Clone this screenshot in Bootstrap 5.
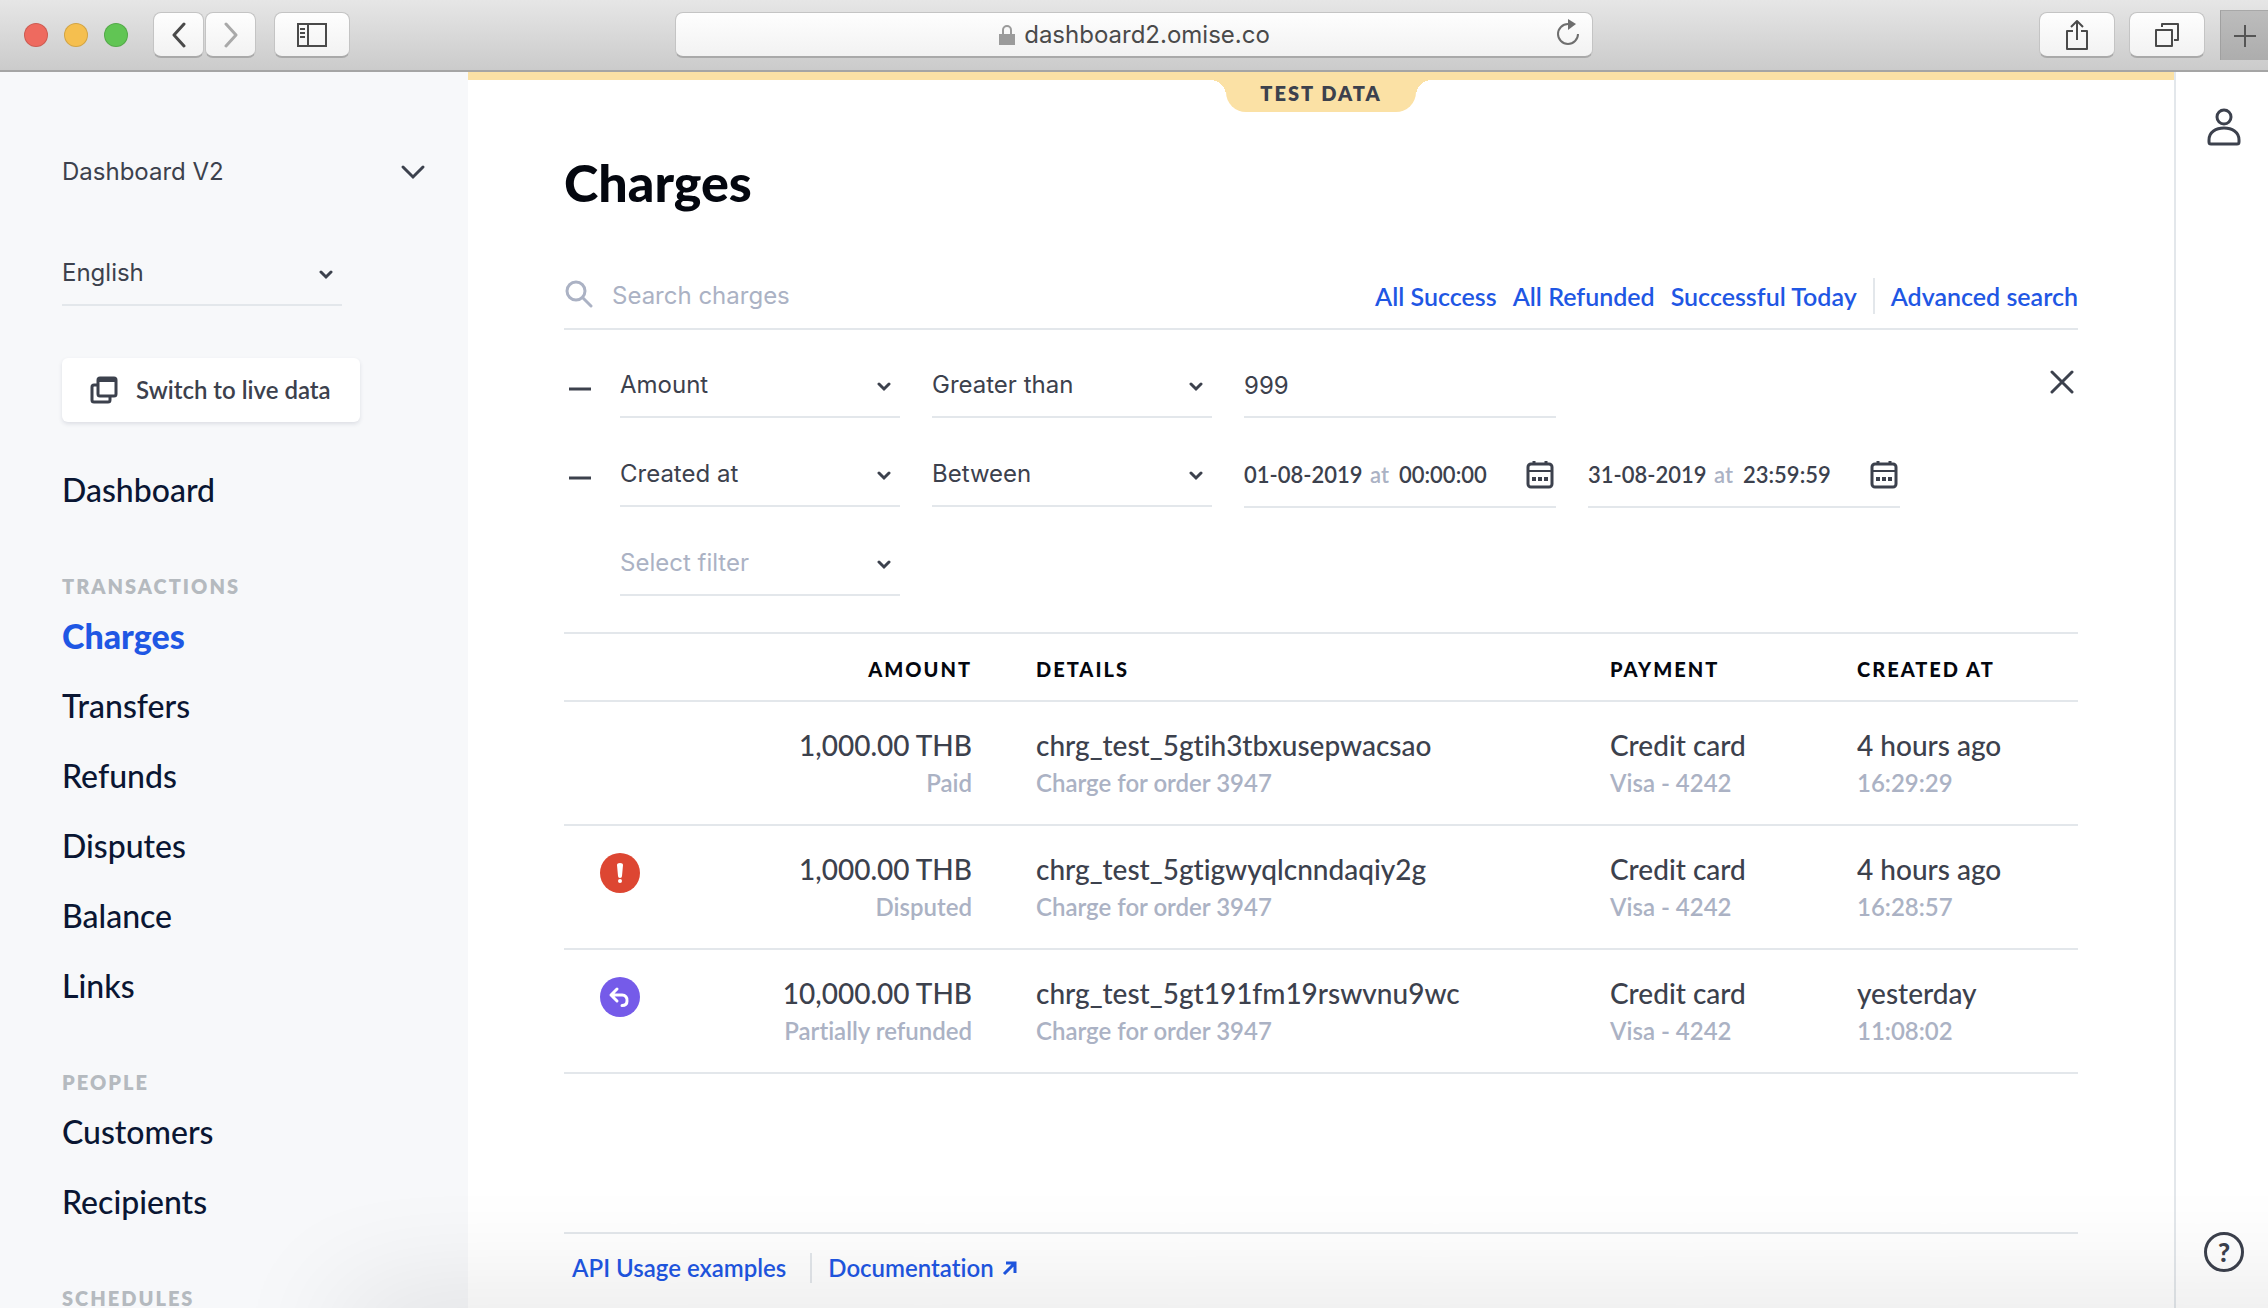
<!DOCTYPE html>
<html lang="en">
<head>
<meta charset="utf-8">
<meta name="viewport" content="width=device-width, initial-scale=1">
<title>Charges</title>
<link href="https://cdn.jsdelivr.net/npm/bootstrap@5.3.0/dist/css/bootstrap.min.css" rel="stylesheet">
<script src="https://cdn.jsdelivr.net/npm/bootstrap@5.3.0/dist/js/bootstrap.bundle.min.js"></script>
<style>
:root {
  --ink: #3c414d;
  --navy: #0a1633;
  --muted: #abb2c4;
  --rule: #e3e7eb;
  --link: #1f57e4;
  --brand: Lato, "Open Sans", sans-serif;
  --system: Inter, "Liberation Sans", sans-serif;
}
body { font-family: var(--brand); font-size: 24px; line-height: 32px; color: var(--ink); background: #fff; font-variant-ligatures: none; }
svg { display: block; flex: none; fill: none; stroke: currentColor; }
a { color: var(--link); text-decoration: none; }
button { color: inherit; }

/* browser toolbar */
.toolbar { height: 72px; background: linear-gradient(#e6e6e6, #cbcbcb); border-bottom: 2px solid #a5a5a5; font-family: var(--system); }
.toolbar-side { flex: 1 1 0; }
.lights { margin: 0 25px 0 24px; }
.light { width: 24px; height: 24px; border-radius: 50%; border: 1px solid rgba(0, 0, 0, .14); }
.light-red { background: #ee6a5f; }
.light-amber { background: #f5bf4f; }
.light-green { background: #61c554; }
.tool { height: 46px; border: 1px solid #c4c4c4; border-bottom: 2px solid #a9a9a9; border-radius: 8px; background: linear-gradient(#fefefe, #f2f2f2); color: #4a4a4a; padding: 0; display: flex; align-items: center; justify-content: center; }
.tool-slim { width: 51px; margin-right: 1px; }
.tool-wide { width: 76px; }
.tool-panel { margin-left: 17px; }
.tool-off { color: #a9a9a9; }
.address { width: 918px; position: relative; flex-shrink: 1; }
.address .lock { color: #9b9b9b; }
.address .reload { position: absolute; right: 12px; top: 6px; border: 0; background: none; padding: 0; color: #6e6e6e; }
.tool-pair { gap: 14px; margin-right: 15px; }
.new-tab { width: 48px; height: 50px; background: linear-gradient(#bcbcbc, #adadad); border: 0; border-left: 1px solid #a0a0a0; border-top: 1px solid #a8a8a8; color: #555; padding: 0; }

/* page shell */
.shell { height: calc(100vh - 72px); min-height: 0; }
.sidebar { width: 468px; background: #f7f8fa; padding: 83px 42px 0 62px; overflow: hidden; }
.account { border: 0; background: none; padding: 0; height: 34px; font-family: var(--system); font-size: 24px; }
.system-select, .system-input { height: 64px; border: 0; border-bottom: 2px solid var(--rule); border-radius: 0; padding: 0 32px 0 0; background-color: transparent; color: var(--ink); font-family: var(--system); font-size: 24px; line-height: 32px; appearance: none; outline: 0; }
.system-select.unset { color: var(--muted); }
.picker { position: relative; }
.picker svg { position: absolute; right: 9px; top: 28px; pointer-events: none; }
.language { width: 280px; margin-top: 53px; }
.live { width: 298px; height: 64px; margin-top: 52px; padding: 0 28px; gap: 18px; background: #fff; border: 0; border-radius: 6px; box-shadow: 0 2px 4px rgba(30, 40, 70, .12); font-size: 24px; font-weight: 600; }
.menu { margin-top: 33px; font-size: 32px; font-weight: 500; }
.menu a { display: block; color: var(--navy); line-height: 70px; }
.menu a.current { color: var(--link); font-size: 34px; font-weight: 900; }
.menu h2 { margin: 52px 0 6px; font-size: 20px; line-height: 18px; font-weight: 800; letter-spacing: 2px; color: #b5babf; text-transform: uppercase; }

.content { flex: 1 1 0; min-width: 0; border-top: 8px solid #fbe1a5; padding: 0 96px; position: relative; }
.test-tab { position: absolute; top: 0; left: 50%; margin-left: -95px; width: 190px; height: 32px; line-height: 26px; text-align: center; background: #fbe1a5; border-radius: 0 0 20px 20px; font-size: 20px; font-weight: 800; letter-spacing: 2px; }
.test-tab::before, .test-tab::after { content: ""; position: absolute; top: 0; width: 16px; height: 16px; }
.test-tab::before { right: 100%; background: radial-gradient(circle at 0 100%, transparent 16px, #fbe1a5 16px); }
.test-tab::after { left: 100%; background: radial-gradient(circle at 100% 100%, transparent 16px, #fbe1a5 16px); }
.page-title { margin: 72px 0 0; font-size: 52px; line-height: 60px; font-weight: 900; color: #04070f; }
.search { margin-top: 52px; height: 66px; border-bottom: 2px solid var(--rule); }
.search svg { color: var(--muted); }
.search input { border: 0; outline: 0; padding: 0; width: 400px; font-family: var(--system); font-size: 24px; color: var(--ink); background: none; }
.search input::placeholder { color: var(--muted); opacity: 1; }
.search a { font-size: 25px; font-weight: 600; }
.page-foot a { font-weight: 600; }
.split { width: 2px; height: 36px; background: var(--rule); }
.filters { padding-top: 24px; }
.filter-row { height: 64px; margin-bottom: 25px; gap: 32px; }
.drop, .drop-gap { width: 24px; margin-left: 4px; margin-right: -4px; border: 0; background: none; padding: 6px 0 0; }
.field { width: 280px; }
.value { width: 312px; padding: 0; }
.moment { width: 312px; height: 65px; border-bottom: 2px solid var(--rule); margin-bottom: -1px; padding-right: 2px; font-size: 22px; font-weight: 600; }
.moment input { border: 0; outline: 0; padding: 0; background: none; color: var(--ink); font: inherit; }
.moment .day { width: 126px; }
.moment .hour { width: 108px; }
.moment label { color: var(--muted); width: 29px; }
.clear { border: 0; background: none; padding: 0 0 8px; margin-right: 4px; }

.charges { margin-top: 11px; width: 100%; table-layout: fixed; border-top: 2px solid var(--rule); border-collapse: collapse; }
.charges tr { border-bottom: 2px solid var(--rule); }
.charges th { padding: 23px 0 19px 32px; font-size: 20px; line-height: 24px; font-weight: 900; letter-spacing: 2px; color: #04070f; text-transform: uppercase; }
.charges td { padding: 24px 0 22px 32px; vertical-align: top; white-space: nowrap; }
.charges .sum { text-align: right; padding-left: 0; padding-right: 32px; }
.charges .state { padding: 27px 0 0 36px; }
.charges .col-state { width: 150px; }
.charges .col-sum { width: 290px; }
.charges .col-pay { width: 247px; }
.charges .col-time { width: 253px; }
.line-main { display: block; font-size: 28px; line-height: 38px; font-weight: 500; }
.line-sub { display: block; font-size: 24px; line-height: 38px; font-weight: 600; color: var(--muted); }
.page-foot { height: 76px; border-top: 2px solid var(--rule); padding: 0 0 6px 8px; gap: 16px; }
.page-foot .split { height: 30px; margin-left: 8px; }

.rail { width: 94px; border-left: 2px solid var(--rule); padding: 36px 0 36px 4px; }
.rail button { border: 0; background: none; padding: 0; }
.rail .help { font-size: 26px; font-weight: 900; line-height: 34px; width: 40px; height: 40px; border: 3px solid var(--ink); border-radius: 50%; }
.window-shade { position: fixed; left: 345px; right: -200px; bottom: -60px; height: 60px; box-shadow: 0 0 120px rgba(0, 0, 0, .16); pointer-events: none; }
</style>
</head>
<body class="overflow-hidden">
<header class="toolbar d-flex align-items-center">
  <div class="toolbar-side d-flex align-items-center">
    <div class="lights d-flex gap-3"><span class="light light-red"></span><span class="light light-amber"></span><span class="light light-green"></span></div>
    <button class="tool tool-slim" aria-label="Back"><svg width="16" height="26" viewBox="0 0 16 26" stroke-width="3" stroke-linecap="round" stroke-linejoin="round"><path d="M13 2 3 13l10 11"/></svg></button>
    <button class="tool tool-slim tool-off" aria-label="Forward"><svg width="16" height="26" viewBox="0 0 16 26" stroke-width="3" stroke-linecap="round" stroke-linejoin="round"><path d="m3 2 10 11L3 24"/></svg></button>
    <button class="tool tool-wide tool-panel" aria-label="Show sidebar"><svg width="32" height="24" viewBox="0 0 32 24" stroke-width="2"><path d="M2 1h28v22H2zM12 1v22M4 6h5M4 10h5M4 14h5"/></svg></button>
  </div>
  <div class="tool address gap-2">
    <svg class="lock" width="18" height="22" viewBox="0 0 18 22" stroke-width="2"><path d="M5 10V6a4 4 0 0 1 8 0v4"/><path d="M1 10h16v11H1z" fill="currentColor" stroke="none"/></svg>
    <span>dashboard2.omise.co</span>
    <button class="reload" aria-label="Reload"><svg width="24" height="28" viewBox="0 0 24 28" stroke-width="2"><path d="M22 15a10 10 0 1 1-10-10"/><path d="m12 0 8 5-8 6z" fill="currentColor" stroke="none"/></svg></button>
  </div>
  <div class="toolbar-side d-flex justify-content-end align-items-center">
    <div class="tool-pair d-flex">
      <button class="tool tool-wide" aria-label="Share"><svg width="26" height="32" viewBox="0 0 26 32" stroke-width="2" stroke-linejoin="round"><path d="M9 12H3v18h20V12h-6M13 21V2M7 8l6-6 6 6"/></svg></button>
      <button class="tool tool-wide" aria-label="Show tabs"><svg width="26" height="26" viewBox="0 0 26 26" stroke-width="2" stroke-linejoin="round"><path d="M2 8h16v16H2zM8 5V2h16v16h-4"/></svg></button>
    </div>
    <button class="new-tab d-flex align-items-center justify-content-center align-self-end" aria-label="New tab"><svg width="22" height="22" viewBox="0 0 22 22" stroke-width="2"><path d="M11 0v22M0 11h22"/></svg></button>
  </div>
</header>

<div class="shell d-flex">
  <aside class="sidebar flex-shrink-0">
    <button class="account d-flex w-100 align-items-center justify-content-between">Dashboard V2
      <svg width="26" height="16" viewBox="0 0 26 16" stroke-width="3" stroke-linecap="round"><path d="m3 3 10 10L23 3"/></svg>
    </button>
    <div class="picker language">
      <select class="system-select w-100" aria-label="Language"><option>English</option></select>
      <svg width="14" height="10" viewBox="0 0 14 10" stroke-width="3" stroke-linecap="round"><path d="m2 2 5 5 5-5"/></svg>
    </div>
    <button class="live d-flex align-items-center">
      <svg width="28" height="28" viewBox="0 0 28 28" stroke-width="3" stroke-linejoin="round"><path d="M8 9H4a2 2 0 0 0-2 2v13a2 2 0 0 0 2 2h14a2 2 0 0 0 2-2v-4"/><rect x="8" y="2" width="18" height="18" rx="2"/><path d="M8 4h18" stroke-width="4"/></svg>
      <span>Switch to live data</span>
    </button>
    <nav class="menu">
      <a href="#">Dashboard</a>
      <h2>Transactions</h2>
      <a href="#" class="current">Charges</a>
      <a href="#">Transfers</a>
      <a href="#">Refunds</a>
      <a href="#">Disputes</a>
      <a href="#">Balance</a>
      <a href="#">Links</a>
      <h2>People</h2>
      <a href="#">Customers</a>
      <a href="#">Recipients</a>
      <h2>Schedules</h2>
    </nav>
  </aside>

  <main class="content d-flex flex-column">
    <div class="test-tab">TEST DATA</div>
    <h1 class="page-title">Charges</h1>
    <form class="search d-flex align-items-center gap-3">
      <svg class="mb-1" width="32" height="28" viewBox="0 0 32 28" stroke-width="3" stroke-linecap="round"><circle cx="12" cy="11" r="9"/><path d="m19 18 8 8"/></svg>
      <input type="search" placeholder="Search charges" aria-label="Search charges">
      <div class="d-flex align-items-center gap-3 ms-auto">
        <a href="#">All Success</a><a href="#">All Refunded</a><a href="#">Successful Today</a><span class="split"></span><a href="#">Advanced search</a>
      </div>
    </form>

    <form class="filters">
      <div class="filter-row d-flex align-items-center">
        <button type="button" class="drop" aria-label="Remove filter"><svg width="24" height="4" viewBox="0 0 24 4" stroke-width="3"><path d="M1 2h22"/></svg></button>
        <div class="picker field"><select class="system-select w-100" aria-label="Filter"><option>Amount</option></select><svg width="14" height="10" viewBox="0 0 14 10" stroke-width="3" stroke-linecap="round"><path d="m2 2 5 5 5-5"/></svg></div>
        <div class="picker field"><select class="system-select w-100" aria-label="Condition"><option>Greater than</option></select><svg width="14" height="10" viewBox="0 0 14 10" stroke-width="3" stroke-linecap="round"><path d="m2 2 5 5 5-5"/></svg></div>
        <input class="system-input value" type="text" value="999" aria-label="Value">
        <button type="button" class="clear ms-auto" aria-label="Clear filters"><svg width="24" height="24" viewBox="0 0 24 24" stroke-width="3" stroke-linecap="round"><path d="m2 2 20 20M22 2 2 22"/></svg></button>
      </div>
      <div class="filter-row d-flex align-items-center">
        <button type="button" class="drop" aria-label="Remove filter"><svg width="24" height="4" viewBox="0 0 24 4" stroke-width="3"><path d="M1 2h22"/></svg></button>
        <div class="picker field"><select class="system-select w-100" aria-label="Filter"><option>Created at</option></select><svg width="14" height="10" viewBox="0 0 14 10" stroke-width="3" stroke-linecap="round"><path d="m2 2 5 5 5-5"/></svg></div>
        <div class="picker field"><select class="system-select w-100" aria-label="Condition"><option>Between</option></select><svg width="14" height="10" viewBox="0 0 14 10" stroke-width="3" stroke-linecap="round"><path d="m2 2 5 5 5-5"/></svg></div>
        <div class="moment d-flex align-items-center">
          <input class="day" type="text" value="01-08-2019" aria-label="From date"><label for="from-time">at</label><input class="hour" id="from-time" type="text" value="00:00:00">
          <svg class="ms-auto" width="28" height="30" viewBox="0 0 28 30" stroke-width="3"><rect x="2" y="4" width="24" height="23" rx="3"/><path d="M2 11h24" stroke-width="2"/><path d="M8 1v4M20 1v4"/><path d="M6 19h4M12 19h4M18 19h4" stroke-width="4"/></svg>
        </div>
        <div class="moment d-flex align-items-center">
          <input class="day" type="text" value="31-08-2019" aria-label="To date"><label for="to-time">at</label><input class="hour" id="to-time" type="text" value="23:59:59">
          <svg class="ms-auto" width="28" height="30" viewBox="0 0 28 30" stroke-width="3"><rect x="2" y="4" width="24" height="23" rx="3"/><path d="M2 11h24" stroke-width="2"/><path d="M8 1v4M20 1v4"/><path d="M6 19h4M12 19h4M18 19h4" stroke-width="4"/></svg>
        </div>
      </div>
      <div class="filter-row d-flex align-items-center">
        <span class="drop-gap"></span>
        <div class="picker field"><select class="system-select unset w-100" aria-label="New filter"><option>Select filter</option></select><svg width="14" height="10" viewBox="0 0 14 10" stroke-width="3" stroke-linecap="round"><path d="m2 2 5 5 5-5"/></svg></div>
      </div>
    </form>

    <table class="charges">
      <colgroup><col class="col-state"><col class="col-sum"><col><col class="col-pay"><col class="col-time"></colgroup>
      <thead><tr><th></th><th class="sum">Amount</th><th>Details</th><th>Payment</th><th>Created at</th></tr></thead>
      <tbody>
        <tr>
          <td class="state"></td>
          <td class="sum"><span class="line-main">1,000.00 THB</span><span class="line-sub">Paid</span></td>
          <td><span class="line-main">chrg_test_5gtih3tbxusepwacsao</span><span class="line-sub">Charge for order 3947</span></td>
          <td><span class="line-main">Credit card</span><span class="line-sub">Visa - 4242</span></td>
          <td><span class="line-main">4 hours ago</span><span class="line-sub">16:29:29</span></td>
        </tr>
        <tr>
          <td class="state"><svg width="40" height="40" viewBox="0 0 40 40"><circle cx="20" cy="20" r="20" fill="#dd4632" stroke="none"/><path d="M17 12a3 2 0 0 1 6 0l-1 11a2 2 0 0 1-4 0z" fill="#fff" stroke="none"/><circle cx="20" cy="28" r="2" fill="#fff" stroke="none"/></svg></td>
          <td class="sum"><span class="line-main">1,000.00 THB</span><span class="line-sub">Disputed</span></td>
          <td><span class="line-main">chrg_test_5gtigwyqlcnndaqiy2g</span><span class="line-sub">Charge for order 3947</span></td>
          <td><span class="line-main">Credit card</span><span class="line-sub">Visa - 4242</span></td>
          <td><span class="line-main">4 hours ago</span><span class="line-sub">16:28:57</span></td>
        </tr>
        <tr>
          <td class="state"><svg width="40" height="40" viewBox="0 0 40 40"><circle cx="20" cy="20" r="20" fill="#755be9" stroke="none"/><path d="m17 12-6 6 6 6M11 18h11a5 5 0 0 1 5 6c0 3-2 4.500-5 4.500" stroke="#fff" stroke-width="3" stroke-linecap="round" stroke-linejoin="round"/></svg></td>
          <td class="sum"><span class="line-main">10,000.00 THB</span><span class="line-sub">Partially refunded</span></td>
          <td><span class="line-main">chrg_test_5gt191fm19rswvnu9wc</span><span class="line-sub">Charge for order 3947</span></td>
          <td><span class="line-main">Credit card</span><span class="line-sub">Visa - 4242</span></td>
          <td><span class="line-main">yesterday</span><span class="line-sub">11:08:02</span></td>
        </tr>
      </tbody>
    </table>

    <footer class="page-foot d-flex align-items-center mt-auto">
      <a href="#">API Usage examples</a><span class="split"></span>
      <a href="#" class="d-flex align-items-center gap-2">Documentation <svg width="16" height="16" viewBox="0 0 16 16" stroke-width="3"><path d="M4 3h9v10M13 3 2 14"/></svg></a>
    </footer>
  </main>

  <aside class="rail flex-shrink-0 d-flex flex-column align-items-center justify-content-between">
    <button aria-label="Account"><svg width="34" height="38" viewBox="0 0 34 38" stroke-width="3"><circle cx="17" cy="9" r="7"/><path d="M2 32c0-8 7-12 15-12s15 4 15 12v2a2 2 0 0 1-2 2H4a2 2 0 0 1-2-2z"/></svg></button>
    <button class="help" aria-label="Help">?</button>
  </aside>
</div>
<div class="window-shade"></div>
</body>
</html>
